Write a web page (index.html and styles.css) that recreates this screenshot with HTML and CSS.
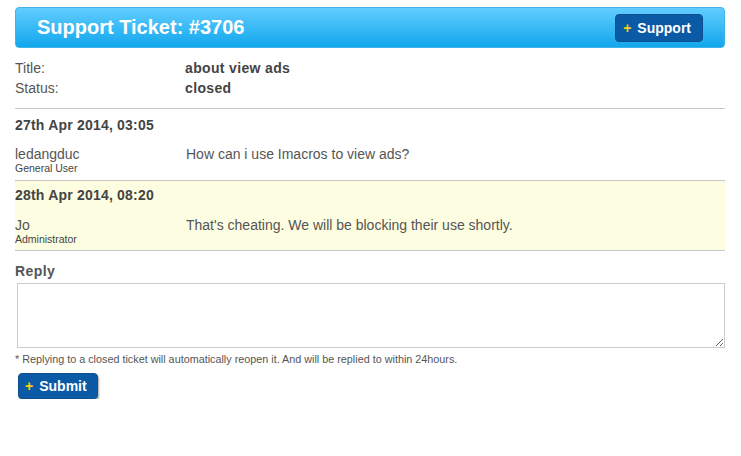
FILE: index.html
```html
<!DOCTYPE html>
<html>
<head>
<meta charset="utf-8">
<link rel="stylesheet" href="styles.css">
</head>
<body>
<div class="page">
  <div class="header">
    <h1 class="title">Support Ticket: #3706</h1>
    <a class="btn btn-header"><span class="plus">+</span> Support</a>
  </div>
  <div class="info">
    <div class="info-row"><span class="label">Title:</span><span class="value">about view ads</span></div>
    <div class="info-row"><span class="label">Status:</span><span class="value">closed</span></div>
  </div>
  <div class="msg">
    <div class="date">27th Apr 2014, 03:05</div>
    <div class="msg-body">
      <div class="author"><div class="name">ledangduc</div><div class="role">General User</div></div>
      <div class="text">How can i use Imacros to view ads?</div>
    </div>
  </div>
  <div class="msg msg-staff">
    <div class="date">28th Apr 2014, 08:20</div>
    <div class="msg-body">
      <div class="author"><div class="name">Jo</div><div class="role">Administrator</div></div>
      <div class="text">That's cheating. We will be blocking their use shortly.</div>
    </div>
  </div>
  <div class="reply">
    <div class="reply-label">Reply</div>
    <textarea class="reply-box"></textarea>
    <div class="note">* Replying to a closed ticket will automatically reopen it. And will be replied to within 24hours.</div>
    <a class="btn btn-submit"><span class="plus">+</span> Submit</a>
  </div>
</div>
</body>
</html>
```

FILE: styles.css
```css
* { box-sizing: border-box; }
body {
  margin: 0;
  font-family: "Liberation Sans", Arial, sans-serif;
  color: #444;
  background: #fff;
}
.page {
  width: 710px;
  margin-left: 15px;
  padding-top: 7px;
}
.header {
  height: 41px;
  border-radius: 4px;
  background: linear-gradient(#62ccff, #12a7ec);
  border: 1px solid #3fb3ea;
  display: flex;
  align-items: center;
  justify-content: space-between;
  padding: 0 21px 0 21px;
}
.title {
  margin: 0;
  font-size: 20px;
  font-weight: bold;
  color: #fff;
}
.btn {
  display: inline-flex;
  align-items: center;
  color: #fff;
  font-weight: bold;
  font-size: 14px;
  background: #0b5aa5;
  border-radius: 4px;
  text-decoration: none;
}
.plus { color: #f2d21a; margin-right: 6px; font-size: 14px; }
.btn-header {
  height: 28px;
  padding: 0 11px 0 7px;
  border: 1px solid #0d4f91;
}
.info {
  padding-top: 10px;
  padding-bottom: 10px;
  border-bottom: 1px solid #c8c8c8;
}
.info-row {
  display: flex;
  font-size: 14px;
  line-height: 20px;
}
.label { width: 170px; color: #555; }
.value { font-weight: bold; color: #444; letter-spacing: 0.35px; }
.msg {
  border-bottom: 1px solid #c8c8c8;
  padding: 7px 0 4px;
  height: 72px;
}
.msg-staff { background: #fdfde1; height: 70px; padding-top: 5px; }
.date {
  font-size: 14px;
  font-weight: bold;
  color: #444;
  line-height: 18px;
  letter-spacing: 0.2px;
}
.msg-body {
  display: flex;
  margin-top: 12px;
}
.msg-staff .msg-body { margin-top: 13px; }
.author { width: 171px; }
.name { font-size: 14px; line-height: 16px; color: #555; }
.role { font-size: 10.5px; line-height: 13px; color: #444; }
.text { font-size: 14px; line-height: 16px; color: #555; }
.reply { padding-top: 12px; }
.reply-label {
  font-size: 14px;
  font-weight: bold;
  color: #555;
  line-height: 16px;
  letter-spacing: 0.4px;
}
.reply-box {
  display: block;
  margin: 4px 0 0 2px;
  width: 708px;
  height: 65px;
  border: 1px solid #ccc;
  border-radius: 0;
  resize: vertical;
}
.note {
  font-size: 10.8px;
  color: #555;
  margin-top: 5px;
  line-height: 13px;
}
.btn-submit {
  margin: 7px 0 0 3px;
  height: 26px;
  padding: 0 10px 0 6px;
  border: 1px solid #0d4f91;
  box-shadow: 1px 2px 2px rgba(0,0,0,0.35);
}
```
